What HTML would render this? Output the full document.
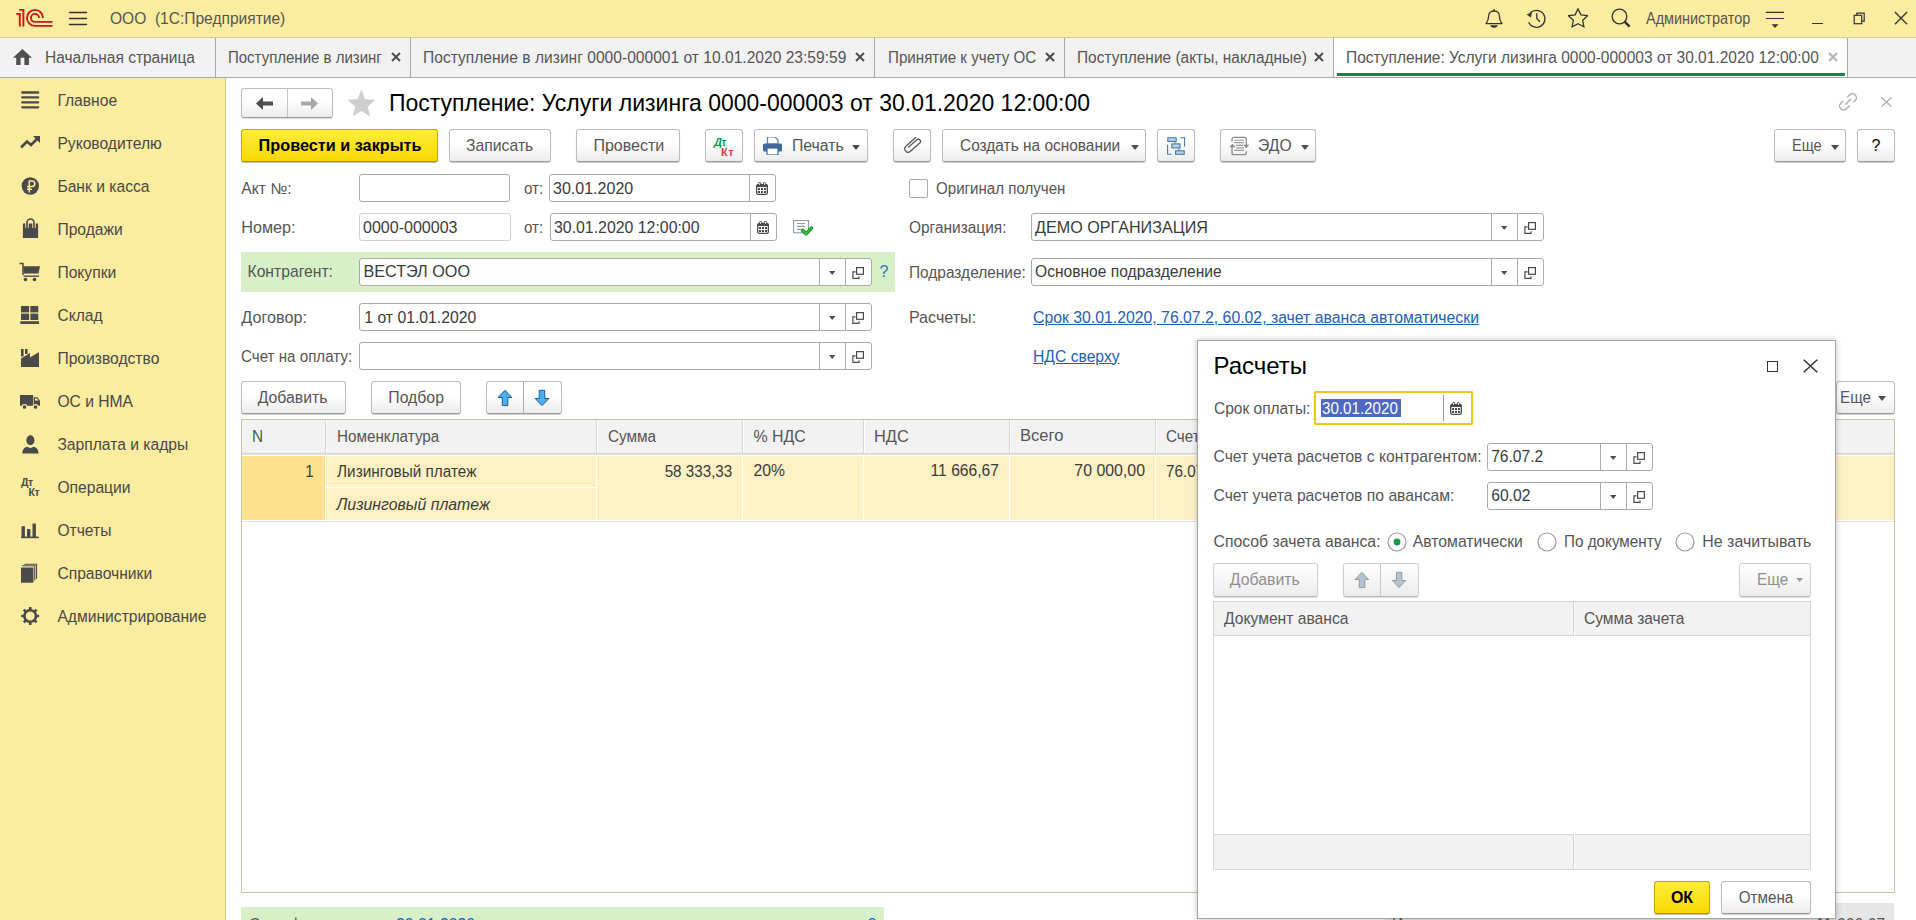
<!DOCTYPE html><html><head><meta charset="utf-8"><style>
*{margin:0;padding:0}
html,body{width:1916px;height:920px;overflow:hidden;background:#fff;font-family:"Liberation Sans",sans-serif;}
.t{position:absolute;white-space:pre;}
.r{position:absolute;}
</style></head><body><div class="r" style="left:0px;top:0px;width:1916px;height:37px;background:#fbec9f;"></div>
<div class="r" style="left:0px;top:37px;width:1916px;height:1px;background:#d9cb85;"></div>
<svg class="r" style="left:15px;top:8px" width="39" height="20" viewBox="0 0 39 20"><g fill="none" stroke="#d3121e" stroke-width="1.9"><path d="M1.2 5.9H4.8V18.5M4.2 1.9H8.4V18.5"/><path d="M28 9.9A8 8 0 1 0 20 17.9H37.5"/><path d="M24 9.9A4 4 0 1 0 20 13.9H37.5"/></g></svg>
<svg class="r" style="left:68px;top:10px" width="20" height="16" viewBox="0 0 20 16"><g stroke="#333" stroke-width="1.4" stroke-linecap="round"><path d="M1.5 2.5H18.5M1.5 8.5H18.5M1.5 14.5H18.5"/></g></svg>
<div class="t " style="left:110px;transform:scaleX(0.9842);transform-origin:0 0;top:8.03px;font-size:15.8px;line-height:21px;color:#555555;font-weight:normal;font-style:normal;">ООО  (1С:Предприятие)</div>
<svg class="r" style="left:1484px;top:8px" width="20" height="22" viewBox="0 0 20 22"><circle cx="10" cy="2.3" r="1.1" fill="#333"/><path d="M2 15.6C4 13 4.6 11 4.6 8.2C4.6 5 7 3.2 10 3.2S15.4 5 15.4 8.2C15.4 11 16 13 18 15.6Z" fill="none" stroke="#333" stroke-width="1.25" stroke-linejoin="round"/><path d="M6.4 17.3H13.6A3.6 2.4 0 0 1 6.4 17.3Z" fill="#333"/></svg>
<svg class="r" style="left:1525px;top:8px" width="22" height="22" viewBox="0 0 22 22"><g fill="none" stroke="#333" stroke-width="1.3"><path d="M5.2 5A8.5 8.5 0 1 1 3.6 14.2"/><path d="M11.8 5.3V10.5L14.9 13.8"/></g><path d="M1.6 6.4L6.9 4.3L6 9.6Z" fill="#333"/></svg>
<svg class="r" style="left:1568px;top:8px" width="20" height="21" viewBox="0 0 20 21"><path d="M10.00 0.80 L12.88 6.84 L19.51 7.71 L14.66 12.31 L15.88 18.89 L10.00 15.70 L4.12 18.89 L5.34 12.31 L0.49 7.71 L7.12 6.84Z" fill="none" stroke="#333" stroke-width="1.3" stroke-linejoin="miter"/></svg>
<svg class="r" style="left:1610px;top:7px" width="22" height="22" viewBox="0 0 22 22"><circle cx="9.5" cy="9.5" r="7.3" fill="none" stroke="#333" stroke-width="1.35"/><path d="M14.6 14.6L19.6 19.6" stroke="#333" stroke-width="2.6"/></svg>
<div class="t " style="left:1646px;transform:scaleX(0.9146);transform-origin:0 0;top:8.03px;font-size:15.8px;line-height:21px;color:#555555;font-weight:normal;font-style:normal;">Администратор</div>
<svg class="r" style="left:1764px;top:10px" width="22" height="20" viewBox="0 0 22 20"><g stroke="#333" stroke-width="1.2"><path d="M1.9 2.4H20M1.9 8.5H20"/></g><path d="M7.5 14.2h7l-3.5 3.8z" fill="#333"/></svg>
<div class="r" style="left:1812px;top:22.7px;width:11px;height:1.1999999999999993px;background:#333;"></div>
<svg class="r" style="left:1853px;top:12px" width="13" height="13" viewBox="0 0 13 13"><g fill="none" stroke="#333" stroke-width="1.2"><rect x="1.2" y="3.3" width="7.5" height="8.4"/><path d="M3.8 3.3V1.1h7.4v8.1H8.7"/></g></svg>
<svg class="r" style="left:1894px;top:11px" width="14" height="14" viewBox="0 0 14 14"><path d="M.9 1L13.1 13.2M13.1 1L.9 13.2" stroke="#333" stroke-width="1.3"/></svg>
<div class="r" style="left:0px;top:38px;width:1916px;height:39px;background:#f2f2f2;"></div>
<div class="r" style="left:0px;top:77px;width:1916px;height:1px;background:#a8a8a8;"></div>
<div class="r" style="left:215px;top:38px;width:1px;height:39px;background:#a8a8a8;"></div>
<div class="r" style="left:410px;top:38px;width:1px;height:39px;background:#a8a8a8;"></div>
<div class="r" style="left:874px;top:38px;width:1px;height:39px;background:#a8a8a8;"></div>
<div class="r" style="left:1064px;top:38px;width:1px;height:39px;background:#a8a8a8;"></div>
<div class="r" style="left:1333px;top:38px;width:1px;height:39px;background:#a8a8a8;"></div>
<div class="r" style="left:1847px;top:38px;width:1px;height:39px;background:#a8a8a8;"></div>
<div class="r" style="left:1334px;top:38px;width:513px;height:39px;background:#fff;"></div>
<div class="r" style="left:1337px;top:73px;width:508px;height:3px;background:#0e8a3f;"></div>
<svg class="r" style="left:12px;top:47px" width="22" height="19" viewBox="0 0 22 19"><path d="M10.4 1.9L20 10.7H16.9V17.9H12.4V10.7H8.6V17.9H4.2V10.7H0.9Z" fill="#4f4f4f"/></svg>
<div class="t " style="left:44.5px;transform:scaleX(0.9810);transform-origin:0 0;top:47.03px;font-size:15.8px;line-height:21px;color:#555555;font-weight:normal;font-style:normal;">Начальная страница</div>
<div class="t " style="left:228.3px;transform:scaleX(0.9494);transform-origin:0 0;top:47.03px;font-size:15.8px;line-height:21px;color:#555555;font-weight:normal;font-style:normal;">Поступление в лизинг</div>
<svg class="r" style="left:391px;top:52px" width="10" height="10" viewBox="0 0 10 10"><path d="M1 1L9 9M9 1L1 9" stroke="#4d4d4d" stroke-width="2"/></svg>
<div class="t " style="left:423px;top:47.59px;font-size:15.6px;line-height:20px;color:#555555;font-weight:normal;font-style:normal;">Поступление в лизинг 0000-000001 от 10.01.2020 23:59:59</div>
<svg class="r" style="left:855px;top:52px" width="10" height="10" viewBox="0 0 10 10"><path d="M1 1L9 9M9 1L1 9" stroke="#4d4d4d" stroke-width="2"/></svg>
<div class="t " style="left:887.8px;transform:scaleX(0.9589);transform-origin:0 0;top:47.03px;font-size:15.8px;line-height:21px;color:#555555;font-weight:normal;font-style:normal;">Принятие к учету ОС</div>
<svg class="r" style="left:1045px;top:52px" width="10" height="10" viewBox="0 0 10 10"><path d="M1 1L9 9M9 1L1 9" stroke="#4d4d4d" stroke-width="2"/></svg>
<div class="t " style="left:1077px;transform:scaleX(0.9778);transform-origin:0 0;top:47.03px;font-size:15.8px;line-height:21px;color:#555555;font-weight:normal;font-style:normal;">Поступление (акты, накладные)</div>
<svg class="r" style="left:1314px;top:52px" width="10" height="10" viewBox="0 0 10 10"><path d="M1 1L9 9M9 1L1 9" stroke="#4d4d4d" stroke-width="2"/></svg>
<div class="t " style="left:1346.4px;transform:scaleX(0.9810);transform-origin:0 0;top:47.03px;font-size:15.8px;line-height:21px;color:#555555;font-weight:normal;font-style:normal;">Поступление: Услуги лизинга 0000-000003 от 30.01.2020 12:00:00</div>
<svg class="r" style="left:1828px;top:52px" width="10" height="10" viewBox="0 0 10 10"><path d="M1 1L9 9M9 1L1 9" stroke="#b0b0b0" stroke-width="2"/></svg>
<div class="r" style="left:0px;top:78px;width:225px;height:842px;background:#fbec9f;"></div>
<div class="r" style="left:225px;top:78px;width:1px;height:842px;background:#d3c78f;"></div>
<div class="t " style="left:57.4px;top:90.58px;font-size:15.65px;line-height:20px;color:#484848;font-weight:normal;font-style:normal;">Главное</div>
<div class="t " style="left:57.4px;top:133.58px;font-size:15.65px;line-height:20px;color:#484848;font-weight:normal;font-style:normal;">Руководителю</div>
<div class="t " style="left:57.4px;top:176.58px;font-size:15.65px;line-height:20px;color:#484848;font-weight:normal;font-style:normal;">Банк и касса</div>
<div class="t " style="left:57.4px;top:219.58px;font-size:15.65px;line-height:20px;color:#484848;font-weight:normal;font-style:normal;">Продажи</div>
<div class="t " style="left:57.4px;top:262.58px;font-size:15.65px;line-height:20px;color:#484848;font-weight:normal;font-style:normal;">Покупки</div>
<div class="t " style="left:57.4px;top:305.58px;font-size:15.65px;line-height:20px;color:#484848;font-weight:normal;font-style:normal;">Склад</div>
<div class="t " style="left:57.4px;top:348.58px;font-size:15.65px;line-height:20px;color:#484848;font-weight:normal;font-style:normal;">Производство</div>
<div class="t " style="left:57.4px;top:391.58px;font-size:15.65px;line-height:20px;color:#484848;font-weight:normal;font-style:normal;">ОС и НМА</div>
<div class="t " style="left:57.4px;top:434.58px;font-size:15.65px;line-height:20px;color:#484848;font-weight:normal;font-style:normal;">Зарплата и кадры</div>
<div class="t " style="left:57.4px;top:477.58px;font-size:15.65px;line-height:20px;color:#484848;font-weight:normal;font-style:normal;">Операции</div>
<div class="t " style="left:57.4px;top:520.58px;font-size:15.65px;line-height:20px;color:#484848;font-weight:normal;font-style:normal;">Отчеты</div>
<div class="t " style="left:57.4px;top:563.58px;font-size:15.65px;line-height:20px;color:#484848;font-weight:normal;font-style:normal;">Справочники</div>
<div class="t " style="left:57.4px;top:606.58px;font-size:15.65px;line-height:20px;color:#484848;font-weight:normal;font-style:normal;">Администрирование</div>
<svg class="r" style="left:20px;top:90px" width="20" height="20" viewBox="0 0 20 20"><g stroke="#4a4a4a" stroke-width="2.3" stroke-linecap="round"><path d="M2.2 2.5H18.2M2.2 7.4H18.2M2.2 12.3H18.2M2.2 17.3H18.2"/></g></svg>
<svg class="r" style="left:20px;top:135px" width="21" height="14" viewBox="0 0 21 14"><path d="M1 12.5L7 6.5L11 10L18 3" fill="none" stroke="#4a4a4a" stroke-width="2.6"/><path d="M13 1H20V8z" fill="#4a4a4a"/></svg>
<svg class="r" style="left:21px;top:177px" width="18" height="18" viewBox="0 0 18 18"><circle cx="9.3" cy="9" r="8.7" fill="#4a4a4a"/><path d="M8.3 15.5V4h2.7a2.8 2.8 0 0 1 0 5.6H6 M6 12.3H11" fill="none" stroke="#fbec9f" stroke-width="1.5"/></svg>
<svg class="r" style="left:22px;top:218px" width="17" height="21" viewBox="0 0 17 21"><path d="M0.9 5.5h15.2v14.5H0.9z" fill="#4a4a4a"/><path d="M5 10V4.5a3.5 3.5 0 0 1 7 0V10" fill="none" stroke="#fbec9f" stroke-width="3.4"/><path d="M5 10V4.5a3.5 3.5 0 0 1 7 0V10" fill="none" stroke="#4a4a4a" stroke-width="1.6"/></svg>
<svg class="r" style="left:19px;top:262px" width="22" height="20" viewBox="0 0 22 20"><path d="M0.5 1.5H4V13" fill="none" stroke="#4a4a4a" stroke-width="1.5"/><path d="M4 4.2H21L19.5 11.5H5z" fill="#4a4a4a"/><path d="M4.5 14.2H20" stroke="#4a4a4a" stroke-width="1.4"/><circle cx="6.5" cy="17.5" r="1.8" fill="#4a4a4a"/><circle cx="15.5" cy="17.5" r="1.8" fill="#4a4a4a"/></svg>
<svg class="r" style="left:20px;top:305px" width="20" height="20" viewBox="0 0 20 20"><g fill="#4a4a4a"><rect x="1" y="1" width="8.1" height="6.4"/><rect x="10.4" y="1" width="7.9" height="6.4"/><rect x="1" y="8.6" width="8.1" height="6.4"/><rect x="10.4" y="8.6" width="7.9" height="6.4"/><rect x="0.3" y="16.2" width="18.7" height="2.8"/></g></svg>
<svg class="r" style="left:20px;top:348px" width="20" height="20" viewBox="0 0 20 20"><path d="M1 19V10.5L10 5V9.5L19 4V19z" fill="#4a4a4a"/><path d="M1 1h2.6v7.5H1z M5 1h2.6v5H5z" fill="#4a4a4a"/></svg>
<svg class="r" style="left:19px;top:394px" width="22" height="16" viewBox="0 0 22 16"><path d="M1 1h13.2v10.8H1z" fill="#4a4a4a"/><path d="M14.8 3.2h3.6l2.6 3.6v5H14.8z" fill="#4a4a4a"/><path d="M16 4.6h2l1.4 2H16z" fill="#fbec9f"/><circle cx="5.5" cy="13" r="2.4" fill="#4a4a4a" stroke="#fbec9f" stroke-width="1.1"/><circle cx="16.5" cy="13" r="2.4" fill="#4a4a4a" stroke="#fbec9f" stroke-width="1.1"/></svg>
<svg class="r" style="left:22px;top:435px" width="17" height="19" viewBox="0 0 17 19"><ellipse cx="8.4" cy="5.3" rx="4" ry="5" fill="#4a4a4a"/><path d="M0.3 18.5c0-4 2.2-6.3 5-6.8l3.1 1.6 3.1-1.6c2.8.5 5 2.8 5 6.8z" fill="#4a4a4a"/></svg>
<div class="t " style="left:21px;top:475.36px;font-size:10.5px;line-height:14px;color:#4a4a4a;font-weight:bold;font-style:normal;letter-spacing:-.4px;">Дт</div>
<div class="t " style="left:28.5px;top:484.96px;font-size:10.5px;line-height:14px;color:#4a4a4a;font-weight:bold;font-style:normal;letter-spacing:-.4px;">Кт</div>
<svg class="r" style="left:20px;top:523px" width="20" height="16" viewBox="0 0 20 16"><g fill="#4a4a4a"><rect x="1.5" y="3.2" width="3.4" height="11"/><rect x="7" y="6" width="3.4" height="8.2"/><rect x="12.5" y="0.5" width="3.4" height="13.7"/><rect x="1" y="13.6" width="17.8" height="1.6"/></g></svg>
<svg class="r" style="left:20px;top:563px" width="20" height="21" viewBox="0 0 20 21"><path d="M1 4.5h12.4v15.2H1z" fill="#4a4a4a"/><path d="M2.6 3V2.8h12.1V17.6 M4.4 1.2h12.1V15.8" fill="none" stroke="#4a4a4a" stroke-width="1.1"/></svg>
<svg class="r" style="left:20px;top:606px" width="20" height="20" viewBox="0 0 20 20"><g transform="translate(10.2 10)"><circle r="5.8" fill="none" stroke="#4a4a4a" stroke-width="2.6"/><g stroke="#4a4a4a" stroke-width="2.6"><path d="M0 -9V-5M0 9V5M-9 0H-5M9 0H5M-6.4 -6.4L-3.6 -3.6M6.4 6.4L3.6 3.6M-6.4 6.4L-3.6 3.6M6.4 -6.4L3.6 -3.6"/></g></g></svg>
<div class="r" style="left:241px;top:88px;width:92px;height:30px;box-sizing:border-box;background:linear-gradient(#ffffff 40%,#ececec);border:1px solid #bdbdbd;border-bottom-color:#9a9a9a;border-radius:3px;box-shadow:0 1px 1px rgba(0,0,0,.15);"></div>
<div class="r" style="left:287px;top:89px;width:1px;height:28px;background:#c4c4c4;"></div>
<svg class="r" style="left:256px;top:97px" width="18" height="13" viewBox="0 0 18 13"><path d="M0 6.5L7 0V4.5H17V8.5H7V13z" fill="#4d4d4d"/></svg>
<svg class="r" style="left:300px;top:97px" width="18" height="13" viewBox="0 0 18 13"><path d="M18 6.5L11 0V4.5H1V8.5H11V13z" fill="#a8a8a8"/></svg>
<svg class="r" style="left:346px;top:88px" width="31" height="30" viewBox="0 0 31 30"><path d="M15.40 1.47 L19.22 11.14 L29.60 11.79 L21.58 18.41 L24.18 28.48 L15.40 22.90 L6.62 28.48 L9.22 18.41 L1.20 11.79 L11.58 11.14Z" fill="#cfcfcf"/></svg>
<div class="t " style="left:389px;top:87.18px;font-size:24px;line-height:31px;color:#000;font-weight:normal;font-style:normal;transform:scaleX(0.9575);transform-origin:0 0;">Поступление: Услуги лизинга 0000-000003 от 30.01.2020 12:00:00</div>
<svg class="r" style="left:1836px;top:89px" width="24" height="24" viewBox="0 0 24 24"><g fill="none" stroke="#ababab" stroke-width="1.45"><path d="M11.2 8.3L13.6 5.9A3.95 3.95 0 0 1 19.2 11.5L17.6 13.1"/><path d="M7.2 11.8L4.8 14.2A3.95 3.95 0 0 0 10.4 19.8L13.7 16.5"/><path d="M9.4 15.5L15.1 9.8"/></g></svg>
<svg class="r" style="left:1881px;top:97px" width="11" height="10" viewBox="0 0 11 10"><path d="M.5 .5L10.5 9.5M10.5 .5L.5 9.5" stroke="#b0b0b0" stroke-width="1.3"/></svg>
<div class="r" style="left:241px;top:129px;width:197px;height:33px;box-sizing:border-box;background:linear-gradient(#ffec40,#f7d900);border:1px solid #c9a800;border-bottom-color:#a88f00;border-radius:3px;box-shadow:0 1px 1px rgba(0,0,0,.25);"></div>
<div class="t " style="left:258.6px;top:134.87px;font-size:16.25px;line-height:21px;color:#000;font-weight:bold;font-style:normal;">Провести и закрыть</div>
<div class="r" style="left:449px;top:129px;width:102px;height:33px;box-sizing:border-box;background:linear-gradient(#ffffff 40%,#ececec);border:1px solid #bdbdbd;border-bottom-color:#9a9a9a;border-radius:3px;box-shadow:0 1px 1px rgba(0,0,0,.2);"></div>
<div class="t " style="left:466px;top:135.54px;font-size:15.75px;line-height:20px;color:#555555;font-weight:normal;font-style:normal;">Записать</div>
<div class="r" style="left:576px;top:129px;width:104px;height:33px;box-sizing:border-box;background:linear-gradient(#ffffff 40%,#ececec);border:1px solid #bdbdbd;border-bottom-color:#9a9a9a;border-radius:3px;box-shadow:0 1px 1px rgba(0,0,0,.2);"></div>
<div class="t " style="left:593.4px;top:134.94px;font-size:16.05px;line-height:21px;color:#555555;font-weight:normal;font-style:normal;">Провести</div>
<div class="r" style="left:705px;top:129px;width:38px;height:33px;box-sizing:border-box;background:linear-gradient(#ffffff 40%,#ececec);border:1px solid #bdbdbd;border-bottom-color:#9a9a9a;border-radius:3px;box-shadow:0 1px 1px rgba(0,0,0,.2);"></div>
<div class="t " style="left:714px;top:135.49px;font-size:11px;line-height:14px;color:#12994a;font-weight:bold;font-style:italic;">Д</div>
<div class="t " style="left:721.3px;top:135.49px;font-size:11px;line-height:14px;color:#12994a;font-weight:bold;font-style:normal;">т</div>
<div class="t " style="left:721px;top:145.19px;font-size:11px;line-height:14px;color:#e03a3a;font-weight:bold;font-style:normal;letter-spacing:.6px;">Кт</div>
<div class="r" style="left:754px;top:129px;width:114px;height:33px;box-sizing:border-box;background:linear-gradient(#ffffff 40%,#ececec);border:1px solid #bdbdbd;border-bottom-color:#9a9a9a;border-radius:3px;box-shadow:0 1px 1px rgba(0,0,0,.2);"></div>
<svg class="r" style="left:763px;top:137px" width="19" height="18" viewBox="0 0 19 18"><path d="M4.5 0h7.5l3 3v4h-10.5z" fill="#fff" stroke="#5a7fa8" stroke-width="1.2"/><rect x="0" y="6.5" width="19" height="8" rx="1.5" fill="#3d6a9c"/><rect x="4" y="11" width="11" height="7" fill="#fff" stroke="#3d6a9c" stroke-width="1.2"/></svg>
<div class="t " style="left:792px;top:135.03px;font-size:15.8px;line-height:21px;color:#555555;font-weight:normal;font-style:normal;">Печать</div>
<svg class="r" style="left:852.0px;top:144.5px" width="8" height="5" viewBox="0 0 8 5"><path d="M0 0H8L4.0 5Z" fill="#4d4d4d"/></svg>
<div class="r" style="left:893px;top:129px;width:38px;height:33px;box-sizing:border-box;background:linear-gradient(#ffffff 40%,#ececec);border:1px solid #bdbdbd;border-bottom-color:#9a9a9a;border-radius:3px;box-shadow:0 1px 1px rgba(0,0,0,.2);"></div>
<svg class="r" style="left:900px;top:134px" width="22" height="22" viewBox="0 0 22 22"><path transform="translate(8.2 14.8) rotate(-42)" d="M13 -3.4L0 -3.4A3.4 3.4 0 0 0 0 3.4L12.5 3.4A2.2 2.2 0 0 0 12.5 -1L1.5 -1" fill="none" stroke="#555" stroke-width="1.25" stroke-linecap="round"/></svg>
<div class="r" style="left:942px;top:129px;width:204px;height:33px;box-sizing:border-box;background:linear-gradient(#ffffff 40%,#ececec);border:1px solid #bdbdbd;border-bottom-color:#9a9a9a;border-radius:3px;box-shadow:0 1px 1px rgba(0,0,0,.2);"></div>
<div class="t " style="left:960.3px;transform:scaleX(0.9778);transform-origin:0 0;top:135.03px;font-size:15.8px;line-height:21px;color:#555555;font-weight:normal;font-style:normal;">Создать на основании</div>
<svg class="r" style="left:1130.5px;top:144.5px" width="8" height="5" viewBox="0 0 8 5"><path d="M0 0H8L4.0 5Z" fill="#4d4d4d"/></svg>
<div class="r" style="left:1157px;top:129px;width:38px;height:33px;box-sizing:border-box;background:linear-gradient(#ffffff 40%,#ececec);border:1px solid #bdbdbd;border-bottom-color:#9a9a9a;border-radius:3px;box-shadow:0 1px 1px rgba(0,0,0,.2);"></div>
<svg class="r" style="left:1165px;top:135px" width="22" height="22" viewBox="0 0 22 22"><g fill="#bcd2ea" stroke="#4778aa" stroke-width="1.1"><rect x="2.8" y="2.8" width="8.4" height="3.6"/><rect x="6.8" y="8.9" width="8.3" height="4"/><rect x="10.6" y="15.8" width="8.6" height="3.5"/></g><path d="M9.8 6.7V8.6M13.9 13.2V15.5M2.6 9.8V19.3H6.7M15.3 2.7H19.5V11.5" fill="none" stroke="#4778aa" stroke-width="1.1"/></svg>
<div class="r" style="left:1220px;top:129px;width:96px;height:33px;box-sizing:border-box;background:linear-gradient(#ffffff 40%,#ececec);border:1px solid #bdbdbd;border-bottom-color:#9a9a9a;border-radius:3px;box-shadow:0 1px 1px rgba(0,0,0,.2);"></div>
<svg class="r" style="left:1227px;top:135px" width="24" height="22" viewBox="0 0 24 22"><g fill="none" stroke="#8a8a8a" stroke-width="1.3"><path d="M5 6.5V4.3a2 2 0 0 1 2-2H17.3a2 2 0 0 1 2 2V10.5"/><path d="M19.3 16.2v1.5a2 2 0 0 1-2 2H7a2 2 0 0 1-2-2V12"/></g><g stroke="#999" stroke-width="1.1"><path d="M7.2 5.3H17M7.2 7.6H17M8.8 10.4H16M9.3 12.9H17M7.2 15.4H17"/></g><path d="M2.4 12.3H8.6L5.5 8.8z M16.1 9.8H22.3L19.2 13.2z" fill="#8a8a8a"/></svg>
<div class="t " style="left:1258px;top:135.56px;font-size:15.7px;line-height:20px;color:#555555;font-weight:normal;font-style:normal;">ЭДО</div>
<svg class="r" style="left:1300.5px;top:144.5px" width="8" height="5" viewBox="0 0 8 5"><path d="M0 0H8L4.0 5Z" fill="#4d4d4d"/></svg>
<div class="r" style="left:1774px;top:129px;width:72px;height:33px;box-sizing:border-box;background:linear-gradient(#ffffff 40%,#ececec);border:1px solid #bdbdbd;border-bottom-color:#9a9a9a;border-radius:3px;box-shadow:0 1px 1px rgba(0,0,0,.2);"></div>
<div class="t " style="left:1791.8px;transform:scaleX(0.9241);transform-origin:0 0;top:135.03px;font-size:15.8px;line-height:21px;color:#555555;font-weight:normal;font-style:normal;">Еще</div>
<svg class="r" style="left:1830.7px;top:144.5px" width="8" height="5" viewBox="0 0 8 5"><path d="M0 0H8L4.0 5Z" fill="#4d4d4d"/></svg>
<div class="r" style="left:1857px;top:129px;width:38px;height:33px;box-sizing:border-box;background:linear-gradient(#ffffff 40%,#ececec);border:1px solid #bdbdbd;border-bottom-color:#9a9a9a;border-radius:3px;box-shadow:0 1px 1px rgba(0,0,0,.2);"></div>
<div class="t " style="left:1876px;transform:translateX(-50%) ;top:134.96px;font-size:16px;line-height:21px;color:#000;font-weight:normal;font-style:normal;">?</div>
<div class="t " style="left:241.3px;top:178.56px;font-size:15.7px;line-height:20px;color:#555555;font-weight:normal;font-style:normal;">Акт №:</div>
<div class="r" style="left:359px;top:174px;width:151px;height:28px;box-sizing:border-box;background:#fff;border:1px solid #a9a9a9;border-radius:3px;"></div>
<div class="t " style="left:523.5px;transform:scaleX(0.9620);transform-origin:0 0;top:178.03px;font-size:15.8px;line-height:21px;color:#555555;font-weight:normal;font-style:normal;">от:</div>
<div class="r" style="left:549px;top:174px;width:227px;height:28px;box-sizing:border-box;background:#fff;border:1px solid #a9a9a9;border-radius:3px;"></div>
<div class="r" style="left:749px;top:175px;width:1px;height:26px;background:#a9a9a9;"></div>
<div class="t " style="left:553px;top:177.94px;font-size:16.05px;line-height:21px;color:#3b3b3b;font-weight:normal;font-style:normal;">30.01.2020</div>
<svg class="r" style="left:756px;top:182px" width="12" height="13" viewBox="0 0 12 13"><rect x=".65" y="2.4" width="10.7" height="9.95" rx="1.6" fill="#fff" stroke="#4a4a4a" stroke-width="1.3"/><path d="M.65 4.9V3.9a1.5 1.5 0 0 1 1.5-1.5h7.7a1.5 1.5 0 0 1 1.5 1.5v1z" fill="#4a4a4a"/><rect x="2.4" y="0" width="2.3" height="4" rx="1.1" fill="#4a4a4a"/><rect x="7.3" y="0" width="2.3" height="4" rx="1.1" fill="#4a4a4a"/><rect x="3.1" y=".8" width=".9" height="2" fill="#fff"/><rect x="8" y=".8" width=".9" height="2" fill="#fff"/><g fill="#4a4a4a"><rect x="2" y="6" width="2" height="2"/><rect x="5" y="6" width="2" height="2"/><rect x="8" y="6" width="2" height="2"/><rect x="2" y="9" width="2" height="2"/><rect x="5" y="9" width="2" height="2"/><rect x="8" y="9" width="2" height="2"/></g></svg>
<div class="r" style="left:909px;top:179px;width:19px;height:19px;box-sizing:border-box;border:1px solid #a9a9a9;border-radius:2px;background:#fff;"></div>
<div class="t " style="left:935.5px;transform:scaleX(0.9557);transform-origin:0 0;top:178.03px;font-size:15.8px;line-height:21px;color:#555555;font-weight:normal;font-style:normal;">Оригинал получен</div>
<div class="t " style="left:241.3px;top:216.89px;font-size:16.2px;line-height:21px;color:#555555;font-weight:normal;font-style:normal;">Номер:</div>
<div class="r" style="left:359px;top:213px;width:152px;height:28px;box-sizing:border-box;background:#fff;border:1px solid #d2d2d2;border-radius:3px;"></div>
<div class="t " style="left:363px;top:216.94px;font-size:16.05px;line-height:21px;color:#3b3b3b;font-weight:normal;font-style:normal;">0000-000003</div>
<div class="t " style="left:524.3px;transform:scaleX(0.9620);transform-origin:0 0;top:217.03px;font-size:15.8px;line-height:21px;color:#555555;font-weight:normal;font-style:normal;">от:</div>
<div class="r" style="left:550px;top:213px;width:227px;height:28px;box-sizing:border-box;background:#fff;border:1px solid #a9a9a9;border-radius:3px;"></div>
<div class="r" style="left:750px;top:214px;width:1px;height:26px;background:#a9a9a9;"></div>
<div class="t " style="left:554px;top:217.00px;font-size:15.87px;line-height:21px;color:#3b3b3b;font-weight:normal;font-style:normal;">30.01.2020 12:00:00</div>
<svg class="r" style="left:757px;top:221px" width="12" height="13" viewBox="0 0 12 13"><rect x=".65" y="2.4" width="10.7" height="9.95" rx="1.6" fill="#fff" stroke="#4a4a4a" stroke-width="1.3"/><path d="M.65 4.9V3.9a1.5 1.5 0 0 1 1.5-1.5h7.7a1.5 1.5 0 0 1 1.5 1.5v1z" fill="#4a4a4a"/><rect x="2.4" y="0" width="2.3" height="4" rx="1.1" fill="#4a4a4a"/><rect x="7.3" y="0" width="2.3" height="4" rx="1.1" fill="#4a4a4a"/><rect x="3.1" y=".8" width=".9" height="2" fill="#fff"/><rect x="8" y=".8" width=".9" height="2" fill="#fff"/><g fill="#4a4a4a"><rect x="2" y="6" width="2" height="2"/><rect x="5" y="6" width="2" height="2"/><rect x="8" y="6" width="2" height="2"/><rect x="2" y="9" width="2" height="2"/><rect x="5" y="9" width="2" height="2"/><rect x="8" y="9" width="2" height="2"/></g></svg>
<svg class="r" style="left:793px;top:220px" width="21" height="17" viewBox="0 0 21 17"><rect x=".6" y=".5" width="15" height="12.3" fill="#fff" stroke="#8a9bb0" stroke-width="1.1"/><path d="M4 3.5H12M4 6.4H12M4 9.4H8.5" stroke="#8a9bb0" stroke-width="1.1"/><path d="M9.6 10.4L13 13.8L18.5 8" fill="none" stroke="#0e7f16" stroke-width="3.4" stroke-linecap="round" stroke-linejoin="round"/><path d="M9.6 10.4L13 13.8L18.5 8" fill="none" stroke="#2bc532" stroke-width="2" stroke-linecap="round" stroke-linejoin="round"/></svg>
<div class="t " style="left:908.9px;transform:scaleX(0.9778);transform-origin:0 0;top:217.03px;font-size:15.8px;line-height:21px;color:#555555;font-weight:normal;font-style:normal;">Организация:</div>
<div class="r" style="left:1031px;top:213px;width:513px;height:28px;box-sizing:border-box;background:#fff;border:1px solid #a9a9a9;border-radius:3px;"></div>
<div class="r" style="left:1491px;top:214px;width:1px;height:26px;background:#a9a9a9;"></div>
<div class="r" style="left:1517px;top:214px;width:1px;height:26px;background:#a9a9a9;"></div>
<div class="t " style="left:1035px;top:216.90px;font-size:16.15px;line-height:21px;color:#3b3b3b;font-weight:normal;font-style:normal;">ДЕМО ОРГАНИЗАЦИЯ</div>
<svg class="r" style="left:1500.8px;top:226.4px" width="6.4" height="4" viewBox="0 0 6.4 4"><path d="M0 0H6.4L3.2 4Z" fill="#4d4d4d"/></svg>
<svg class="r" style="left:1524px;top:221px" width="13" height="14" viewBox="0 0 13 14"><rect x="4.6" y="1.6" width="6.8" height="6.7" fill="none" stroke="#4a4a4a" stroke-width="1.2"/><path d="M3.6 5.8H.9V12.3H7V10.2" fill="none" stroke="#4a4a4a" stroke-width="1.2"/></svg>
<div class="r" style="left:241px;top:252px;width:654px;height:40px;background:#d7f0c7;"></div>
<div class="t " style="left:247.5px;top:262.06px;font-size:15.7px;line-height:20px;color:#555555;font-weight:normal;font-style:normal;">Контрагент:</div>
<div class="r" style="left:359px;top:258px;width:513px;height:28px;box-sizing:border-box;background:#fff;border:1px solid #a9a9a9;border-radius:3px;"></div>
<div class="r" style="left:819px;top:259px;width:1px;height:26px;background:#a9a9a9;"></div>
<div class="r" style="left:845px;top:259px;width:1px;height:26px;background:#a9a9a9;"></div>
<div class="t " style="left:363.4px;top:261.39px;font-size:16.2px;line-height:21px;color:#3b3b3b;font-weight:normal;font-style:normal;">ВЕСТЭЛ ООО</div>
<svg class="r" style="left:828.8px;top:270.9px" width="6.4" height="4" viewBox="0 0 6.4 4"><path d="M0 0H6.4L3.2 4Z" fill="#4d4d4d"/></svg>
<svg class="r" style="left:852px;top:266px" width="13" height="14" viewBox="0 0 13 14"><rect x="4.6" y="1.6" width="6.8" height="6.7" fill="none" stroke="#4a4a4a" stroke-width="1.2"/><path d="M3.6 5.8H.9V12.3H7V10.2" fill="none" stroke="#4a4a4a" stroke-width="1.2"/></svg>
<div class="t " style="left:884px;transform:translateX(-50%) ;top:261.46px;font-size:16px;line-height:21px;color:#1a78c2;font-weight:normal;font-style:normal;">?</div>
<div class="t " style="left:908.9px;transform:scaleX(0.9778);transform-origin:0 0;top:261.53px;font-size:15.8px;line-height:21px;color:#555555;font-weight:normal;font-style:normal;">Подразделение:</div>
<div class="r" style="left:1031px;top:258px;width:513px;height:28px;box-sizing:border-box;background:#fff;border:1px solid #a9a9a9;border-radius:3px;"></div>
<div class="r" style="left:1491px;top:259px;width:1px;height:26px;background:#a9a9a9;"></div>
<div class="r" style="left:1517px;top:259px;width:1px;height:26px;background:#a9a9a9;"></div>
<div class="t " style="left:1035px;top:262.09px;font-size:15.6px;line-height:20px;color:#3b3b3b;font-weight:normal;font-style:normal;">Основное подразделение</div>
<svg class="r" style="left:1500.8px;top:270.9px" width="6.4" height="4" viewBox="0 0 6.4 4"><path d="M0 0H6.4L3.2 4Z" fill="#4d4d4d"/></svg>
<svg class="r" style="left:1524px;top:266px" width="13" height="14" viewBox="0 0 13 14"><rect x="4.6" y="1.6" width="6.8" height="6.7" fill="none" stroke="#4a4a4a" stroke-width="1.2"/><path d="M3.6 5.8H.9V12.3H7V10.2" fill="none" stroke="#4a4a4a" stroke-width="1.2"/></svg>
<div class="t " style="left:241.3px;top:306.89px;font-size:16.2px;line-height:21px;color:#555555;font-weight:normal;font-style:normal;">Договор:</div>
<div class="r" style="left:359px;top:303px;width:513px;height:28px;box-sizing:border-box;background:#fff;border:1px solid #a9a9a9;border-radius:3px;"></div>
<div class="r" style="left:819px;top:304px;width:1px;height:26px;background:#a9a9a9;"></div>
<div class="r" style="left:845px;top:304px;width:1px;height:26px;background:#a9a9a9;"></div>
<div class="t " style="left:364.3px;top:307.54px;font-size:15.75px;line-height:20px;color:#3b3b3b;font-weight:normal;font-style:normal;">1 от 01.01.2020</div>
<svg class="r" style="left:828.8px;top:315.9px" width="6.4" height="4" viewBox="0 0 6.4 4"><path d="M0 0H6.4L3.2 4Z" fill="#4d4d4d"/></svg>
<svg class="r" style="left:852px;top:311px" width="13" height="14" viewBox="0 0 13 14"><rect x="4.6" y="1.6" width="6.8" height="6.7" fill="none" stroke="#4a4a4a" stroke-width="1.2"/><path d="M3.6 5.8H.9V12.3H7V10.2" fill="none" stroke="#4a4a4a" stroke-width="1.2"/></svg>
<div class="t " style="left:908.9px;top:306.92px;font-size:16.1px;line-height:21px;color:#555555;font-weight:normal;font-style:normal;">Расчеты:</div>
<div class="t " style="left:1033px;top:307.03px;font-size:15.8px;line-height:21px;color:#2160b8;font-weight:normal;font-style:normal;text-decoration:underline;">Срок 30.01.2020, 76.07.2, 60.02, зачет аванса автоматически</div>
<div class="t " style="left:241.3px;transform:scaleX(0.9589);transform-origin:0 0;top:346.03px;font-size:15.8px;line-height:21px;color:#555555;font-weight:normal;font-style:normal;">Счет на оплату:</div>
<div class="r" style="left:359px;top:342px;width:513px;height:28px;box-sizing:border-box;background:#fff;border:1px solid #a9a9a9;border-radius:3px;"></div>
<div class="r" style="left:819px;top:343px;width:1px;height:26px;background:#a9a9a9;"></div>
<div class="r" style="left:845px;top:343px;width:1px;height:26px;background:#a9a9a9;"></div>
<svg class="r" style="left:828.8px;top:354.9px" width="6.4" height="4" viewBox="0 0 6.4 4"><path d="M0 0H6.4L3.2 4Z" fill="#4d4d4d"/></svg>
<svg class="r" style="left:852px;top:350px" width="13" height="14" viewBox="0 0 13 14"><rect x="4.6" y="1.6" width="6.8" height="6.7" fill="none" stroke="#4a4a4a" stroke-width="1.2"/><path d="M3.6 5.8H.9V12.3H7V10.2" fill="none" stroke="#4a4a4a" stroke-width="1.2"/></svg>
<div class="t " style="left:1033px;top:346.56px;font-size:15.7px;line-height:20px;color:#2160b8;font-weight:normal;font-style:normal;text-decoration:underline;">НДС сверху</div>
<div class="r" style="left:241px;top:381px;width:105px;height:33px;box-sizing:border-box;background:linear-gradient(#ffffff 40%,#ececec);border:1px solid #bdbdbd;border-bottom-color:#9a9a9a;border-radius:3px;box-shadow:0 1px 1px rgba(0,0,0,.2);"></div>
<div class="t " style="left:257.7px;top:386.73px;font-size:15.8px;line-height:21px;color:#555555;font-weight:normal;font-style:normal;">Добавить</div>
<div class="r" style="left:371px;top:381px;width:90px;height:33px;box-sizing:border-box;background:linear-gradient(#ffffff 40%,#ececec);border:1px solid #bdbdbd;border-bottom-color:#9a9a9a;border-radius:3px;box-shadow:0 1px 1px rgba(0,0,0,.2);"></div>
<div class="t " style="left:388.3px;top:386.73px;font-size:15.8px;line-height:21px;color:#555555;font-weight:normal;font-style:normal;">Подбор</div>
<div class="r" style="left:486px;top:381px;width:76px;height:33px;box-sizing:border-box;background:linear-gradient(#ffffff 40%,#ececec);border:1px solid #bdbdbd;border-bottom-color:#9a9a9a;border-radius:3px;box-shadow:0 1px 1px rgba(0,0,0,.2);"></div>
<div class="r" style="left:523px;top:382px;width:1px;height:31px;background:#ababab;"></div>
<svg class="r" style="left:497px;top:389px" width="16" height="18" viewBox="0 0 16 18"><path d="M8 1.3L14.8 8.5H10.8V16.6H5.3V8.5H1.1Z" fill="#4ab1ed" stroke="#125d99" stroke-width="1" stroke-linejoin="round"/></svg>
<svg class="r" style="left:534px;top:389px" width="16" height="18" viewBox="0 0 16 18"><path d="M5.2 1.3H10.7V9.5H14.9L8 16.6L1.2 9.5H5.2Z" fill="#4ab1ed" stroke="#125d99" stroke-width="1" stroke-linejoin="round"/></svg>
<div class="r" style="left:1836px;top:381px;width:59px;height:33px;box-sizing:border-box;background:linear-gradient(#ffffff 40%,#ececec);border:1px solid #bdbdbd;border-bottom-color:#9a9a9a;border-radius:3px;box-shadow:0 1px 1px rgba(0,0,0,.2);"></div>
<div class="t " style="left:1840px;transform:scaleX(0.9620);transform-origin:0 0;top:386.73px;font-size:15.8px;line-height:21px;color:#555555;font-weight:normal;font-style:normal;">Еще</div>
<svg class="r" style="left:1878.0px;top:395.5px" width="8" height="5" viewBox="0 0 8 5"><path d="M0 0H8L4.0 5Z" fill="#4d4d4d"/></svg>
<div class="r" style="left:241px;top:419px;width:1654px;height:474px;box-sizing:border-box;border:1px solid #c9c3a3;background:#fff;"></div>
<div class="r" style="left:242px;top:420px;width:1652px;height:33px;background:#f2f2f2;"></div>
<div class="r" style="left:242px;top:453px;width:1652px;height:1px;background:#d2d2d2;"></div>
<div class="r" style="left:242px;top:454px;width:1652px;height:1px;background:#e6e6e6;"></div>
<div class="r" style="left:242px;top:455px;width:1652px;height:1px;background:#fff;"></div>
<div class="r" style="left:242px;top:456px;width:1652px;height:64px;background:#fdf1c4;"></div>
<div class="r" style="left:242px;top:520px;width:1652px;height:1px;background:#fff;"></div>
<div class="r" style="left:242px;top:521px;width:1652px;height:1px;background:#e2e2e2;"></div>
<div class="r" style="left:242px;top:456px;width:83px;height:64px;background:#fce28d;"></div>
<div class="r" style="left:325px;top:420px;width:1px;height:33px;background:#d6d6d6;"></div>
<div class="r" style="left:326px;top:420px;width:1px;height:33px;background:#fff;"></div>
<div class="r" style="left:325px;top:456px;width:1px;height:64px;background:#fff;"></div>
<div class="r" style="left:596px;top:420px;width:1px;height:33px;background:#d6d6d6;"></div>
<div class="r" style="left:597px;top:420px;width:1px;height:33px;background:#fff;"></div>
<div class="r" style="left:596px;top:456px;width:1px;height:64px;background:#fff;"></div>
<div class="r" style="left:742px;top:420px;width:1px;height:33px;background:#d6d6d6;"></div>
<div class="r" style="left:743px;top:420px;width:1px;height:33px;background:#fff;"></div>
<div class="r" style="left:742px;top:456px;width:1px;height:64px;background:#fff;"></div>
<div class="r" style="left:863px;top:420px;width:1px;height:33px;background:#d6d6d6;"></div>
<div class="r" style="left:864px;top:420px;width:1px;height:33px;background:#fff;"></div>
<div class="r" style="left:863px;top:456px;width:1px;height:64px;background:#fff;"></div>
<div class="r" style="left:1009px;top:420px;width:1px;height:33px;background:#d6d6d6;"></div>
<div class="r" style="left:1010px;top:420px;width:1px;height:33px;background:#fff;"></div>
<div class="r" style="left:1009px;top:456px;width:1px;height:64px;background:#fff;"></div>
<div class="r" style="left:1155px;top:420px;width:1px;height:33px;background:#d6d6d6;"></div>
<div class="r" style="left:1156px;top:420px;width:1px;height:33px;background:#fff;"></div>
<div class="r" style="left:1155px;top:456px;width:1px;height:64px;background:#fff;"></div>
<div class="r" style="left:326px;top:487px;width:270px;height:1px;background:#fff;"></div>
<div class="t " style="left:252.3px;transform:scaleX(0.9715);transform-origin:0 0;top:426.03px;font-size:15.8px;line-height:21px;color:#555555;font-weight:normal;font-style:normal;">N</div>
<div class="t " style="left:336.5px;transform:scaleX(0.9652);transform-origin:0 0;top:426.03px;font-size:15.8px;line-height:21px;color:#555555;font-weight:normal;font-style:normal;">Номенклатура</div>
<div class="t " style="left:607.6px;transform:scaleX(0.9684);transform-origin:0 0;top:426.03px;font-size:15.8px;line-height:21px;color:#555555;font-weight:normal;font-style:normal;">Сумма</div>
<div class="t " style="left:753.4px;top:425.97px;font-size:15.95px;line-height:21px;color:#555555;font-weight:normal;font-style:normal;">% НДС</div>
<div class="t " style="left:874px;top:425.82px;font-size:16.4px;line-height:21px;color:#555555;font-weight:normal;font-style:normal;">НДС</div>
<div class="t " style="left:1020px;top:425.25px;font-size:16.6px;line-height:22px;color:#555555;font-weight:normal;font-style:normal;">Всего</div>
<div class="t " style="left:1166px;transform:scaleX(0.9620);transform-origin:0 0;top:426.03px;font-size:15.8px;line-height:21px;color:#555555;font-weight:normal;font-style:normal;">Счет учета</div>
<div class="t " style="right:1602px;transform:scaleX(0.9620);transform-origin:100% 0;top:460.53px;font-size:15.8px;line-height:21px;color:#3b3b3b;font-weight:normal;font-style:normal;">1</div>
<div class="t " style="left:336.5px;transform:scaleX(0.9715);transform-origin:0 0;top:460.53px;font-size:15.8px;line-height:21px;color:#3b3b3b;font-weight:normal;font-style:normal;">Лизинговый платеж</div>
<div class="t " style="left:336.5px;top:494.31px;font-size:15.85px;line-height:21px;color:#3b3b3b;font-weight:normal;font-style:italic;">Лизинговый платеж</div>
<div class="t " style="right:1184px;transform:scaleX(0.9620);transform-origin:100% 0;top:460.53px;font-size:15.8px;line-height:21px;color:#3b3b3b;font-weight:normal;font-style:normal;">58 333,33</div>
<div class="t " style="left:753.4px;top:461.04px;font-size:15.75px;line-height:20px;color:#3b3b3b;font-weight:normal;font-style:normal;">20%</div>
<div class="t " style="right:917px;top:461.08px;font-size:15.65px;line-height:20px;color:#3b3b3b;font-weight:normal;font-style:normal;">11 666,67</div>
<div class="t " style="right:771px;top:460.49px;font-size:15.9px;line-height:21px;color:#3b3b3b;font-weight:normal;font-style:normal;">70 000,00</div>
<div class="t " style="left:1166px;transform:scaleX(0.9620);transform-origin:0 0;top:460.53px;font-size:15.8px;line-height:21px;color:#3b3b3b;font-weight:normal;font-style:normal;">76.07.2</div>
<div class="r" style="left:241px;top:907px;width:643px;height:13px;background:#d7f0c7;"></div>
<div class="r" style="left:1385px;top:903px;width:509px;height:17px;background:#e6e6e6;"></div>
<div class="r" style="left:1197px;top:340px;width:639px;height:579px;box-sizing:border-box;background:#fff;border:1px solid #a5a5a5;box-shadow:0 0 6px rgba(0,0,0,.25);"></div>
<div class="t " style="left:1213.5px;top:350.48px;font-size:24.0px;line-height:31px;color:#000;font-weight:normal;font-style:normal;">Расчеты</div>
<div class="r" style="left:1767px;top:361px;width:11px;height:11px;box-sizing:border-box;border:1.2px solid #333;"></div>
<svg class="r" style="left:1803px;top:359px" width="15" height="14" viewBox="0 0 15 14"><path d="M.7 .7L14.3 13.3M14.3 .7L.7 13.3" stroke="#333" stroke-width="1.5"/></svg>
<div class="t " style="left:1213.5px;transform:scaleX(0.9810);transform-origin:0 0;top:398.03px;font-size:15.8px;line-height:21px;color:#555555;font-weight:normal;font-style:normal;">Срок оплаты:</div>
<div class="r" style="left:1314px;top:391px;width:159px;height:34px;box-sizing:border-box;border:2px solid #f7c514;background:#fff;border-radius:1px;"></div>
<div class="r" style="left:1443px;top:395px;width:1px;height:26px;background:#9a9a9a;"></div>
<div class="r" style="left:1321px;top:399px;width:80px;height:17.5px;background:#4f68c6;"></div>
<div class="t " style="left:1321.5px;transform:scaleX(0.9589);transform-origin:0 0;top:398.03px;font-size:15.8px;line-height:21px;color:#fff;font-weight:normal;font-style:normal;">30.01.2020</div>
<svg class="r" style="left:1450px;top:402px" width="12" height="13" viewBox="0 0 12 13"><rect x=".65" y="2.4" width="10.7" height="9.95" rx="1.6" fill="#fff" stroke="#4a4a4a" stroke-width="1.3"/><path d="M.65 4.9V3.9a1.5 1.5 0 0 1 1.5-1.5h7.7a1.5 1.5 0 0 1 1.5 1.5v1z" fill="#4a4a4a"/><rect x="2.4" y="0" width="2.3" height="4" rx="1.1" fill="#4a4a4a"/><rect x="7.3" y="0" width="2.3" height="4" rx="1.1" fill="#4a4a4a"/><rect x="3.1" y=".8" width=".9" height="2" fill="#fff"/><rect x="8" y=".8" width=".9" height="2" fill="#fff"/><g fill="#4a4a4a"><rect x="2" y="6" width="2" height="2"/><rect x="5" y="6" width="2" height="2"/><rect x="8" y="6" width="2" height="2"/><rect x="2" y="9" width="2" height="2"/><rect x="5" y="9" width="2" height="2"/><rect x="8" y="9" width="2" height="2"/></g></svg>
<div class="t " style="left:1213.5px;top:447.16px;font-size:15.7px;line-height:20px;color:#555555;font-weight:normal;font-style:normal;">Счет учета расчетов с контрагентом:</div>
<div class="r" style="left:1487px;top:443px;width:166px;height:28px;box-sizing:border-box;background:#fff;border:1px solid #a9a9a9;border-radius:3px;"></div>
<div class="r" style="left:1600px;top:444px;width:1px;height:26px;background:#a9a9a9;"></div>
<div class="r" style="left:1626px;top:444px;width:1px;height:26px;background:#a9a9a9;"></div>
<div class="t " style="left:1491.2px;top:447.19px;font-size:15.6px;line-height:20px;color:#3b3b3b;font-weight:normal;font-style:normal;">76.07.2</div>
<svg class="r" style="left:1609.8px;top:455.9px" width="6.4" height="4" viewBox="0 0 6.4 4"><path d="M0 0H6.4L3.2 4Z" fill="#4d4d4d"/></svg>
<svg class="r" style="left:1633px;top:451px" width="13" height="14" viewBox="0 0 13 14"><rect x="4.6" y="1.6" width="6.8" height="6.7" fill="none" stroke="#4a4a4a" stroke-width="1.2"/><path d="M3.6 5.8H.9V12.3H7V10.2" fill="none" stroke="#4a4a4a" stroke-width="1.2"/></svg>
<div class="t " style="left:1213.5px;top:486.16px;font-size:15.7px;line-height:20px;color:#555555;font-weight:normal;font-style:normal;">Счет учета расчетов по авансам:</div>
<div class="r" style="left:1487px;top:482px;width:166px;height:28px;box-sizing:border-box;background:#fff;border:1px solid #a9a9a9;border-radius:3px;"></div>
<div class="r" style="left:1600px;top:483px;width:1px;height:26px;background:#a9a9a9;"></div>
<div class="r" style="left:1626px;top:483px;width:1px;height:26px;background:#a9a9a9;"></div>
<div class="t " style="left:1491.2px;top:486.18px;font-size:15.65px;line-height:20px;color:#3b3b3b;font-weight:normal;font-style:normal;">60.02</div>
<svg class="r" style="left:1609.8px;top:494.9px" width="6.4" height="4" viewBox="0 0 6.4 4"><path d="M0 0H6.4L3.2 4Z" fill="#4d4d4d"/></svg>
<svg class="r" style="left:1633px;top:490px" width="13" height="14" viewBox="0 0 13 14"><rect x="4.6" y="1.6" width="6.8" height="6.7" fill="none" stroke="#4a4a4a" stroke-width="1.2"/><path d="M3.6 5.8H.9V12.3H7V10.2" fill="none" stroke="#4a4a4a" stroke-width="1.2"/></svg>
<div class="t " style="left:1213.5px;top:531.03px;font-size:15.8px;line-height:21px;color:#555555;font-weight:normal;font-style:normal;">Способ зачета аванса:</div>
<svg class="r" style="left:1386.5px;top:531.5px" width="20" height="20" viewBox="0 0 20 20"><circle cx="10" cy="10" r="9" fill="#fff" stroke="#9a9a9a" stroke-width="1.2"/><circle cx="10" cy="10" r="3.4" fill="#129a46"/></svg>
<div class="t " style="left:1412.8px;top:531.54px;font-size:15.75px;line-height:20px;color:#555555;font-weight:normal;font-style:normal;">Автоматически</div>
<svg class="r" style="left:1537.3px;top:531.5px" width="20" height="20" viewBox="0 0 20 20"><circle cx="10" cy="10" r="9" fill="#fff" stroke="#9a9a9a" stroke-width="1.2"/></svg>
<div class="t " style="left:1564.4px;transform:scaleX(0.9652);transform-origin:0 0;top:531.03px;font-size:15.8px;line-height:21px;color:#555555;font-weight:normal;font-style:normal;">По документу</div>
<svg class="r" style="left:1675.2px;top:531.5px" width="20" height="20" viewBox="0 0 20 20"><circle cx="10" cy="10" r="9" fill="#fff" stroke="#9a9a9a" stroke-width="1.2"/></svg>
<div class="t " style="left:1702.3px;top:530.97px;font-size:15.95px;line-height:21px;color:#555555;font-weight:normal;font-style:normal;">Не зачитывать</div>
<div class="r" style="left:1213px;top:563px;width:105px;height:34px;box-sizing:border-box;background:linear-gradient(#ffffff,#ececec);border:1px solid #cfcfcf;border-bottom-color:#b5b5b5;border-radius:3px;box-shadow:0 1px 1px rgba(0,0,0,.15);"></div>
<div class="t " style="left:1229.8px;top:568.51px;font-size:15.85px;line-height:21px;color:#8f8f8f;font-weight:normal;font-style:normal;">Добавить</div>
<div class="r" style="left:1343px;top:563px;width:76px;height:34px;box-sizing:border-box;background:linear-gradient(#ffffff,#ececec);border:1px solid #cfcfcf;border-bottom-color:#b5b5b5;border-radius:3px;box-shadow:0 1px 1px rgba(0,0,0,.15);"></div>
<div class="r" style="left:1380px;top:564px;width:1px;height:33px;background:#c8c8c8;"></div>
<svg class="r" style="left:1353px;top:571px" width="17" height="18" viewBox="0 0 17 18"><path d="M8.8 1.3L15.7 8.5H11.8V16.6H6.3V8.5H2.1Z" fill="#b6c1c9" stroke="#8e9ca7" stroke-width="1" stroke-linejoin="round"/></svg>
<svg class="r" style="left:1391px;top:571px" width="17" height="18" viewBox="0 0 17 18"><path d="M5.4 1.3H10.8V9.4H14.8L8.1 16.6L1.2 9.4H5.4Z" fill="#b6c1c9" stroke="#8e9ca7" stroke-width="1" stroke-linejoin="round"/></svg>
<div class="r" style="left:1739px;top:563px;width:72px;height:34px;box-sizing:border-box;background:linear-gradient(#ffffff,#ececec);border:1px solid #cfcfcf;border-bottom-color:#b5b5b5;border-radius:3px;box-shadow:0 1px 1px rgba(0,0,0,.15);"></div>
<div class="t " style="left:1756.5px;transform:scaleX(0.9715);transform-origin:0 0;top:568.53px;font-size:15.8px;line-height:21px;color:#8f8f8f;font-weight:normal;font-style:normal;">Еще</div>
<svg class="r" style="left:1795.5px;top:578.0px" width="7" height="4" viewBox="0 0 7 4"><path d="M0 0H7L3.5 4Z" fill="#9a9a9a"/></svg>
<div class="r" style="left:1213px;top:601px;width:598px;height:269px;box-sizing:border-box;border:1px solid #d6d6d6;background:#fff;"></div>
<div class="r" style="left:1214px;top:602px;width:596px;height:34px;background:#f2f2f2;border-bottom:1px solid #d6d6d6;box-sizing:border-box;"></div>
<div class="r" style="left:1214px;top:834px;width:596px;height:35px;background:#f2f2f2;border-top:1px solid #d6d6d6;box-sizing:border-box;"></div>
<div class="r" style="left:1573px;top:602px;width:1px;height:34px;background:#d6d6d6;"></div>
<div class="r" style="left:1574px;top:602px;width:1px;height:34px;background:#fff;"></div>
<div class="r" style="left:1573px;top:834px;width:1px;height:35px;background:#d6d6d6;"></div>
<div class="r" style="left:1574px;top:834px;width:1px;height:35px;background:#fff;"></div>
<div class="t " style="left:1224px;top:608.58px;font-size:15.65px;line-height:20px;color:#555555;font-weight:normal;font-style:normal;">Документ аванса</div>
<div class="t " style="left:1584px;transform:scaleX(0.9842);transform-origin:0 0;top:608.03px;font-size:15.8px;line-height:21px;color:#555555;font-weight:normal;font-style:normal;">Сумма зачета</div>
<div class="r" style="left:1654px;top:881px;width:56px;height:33px;box-sizing:border-box;background:linear-gradient(#ffec40,#f7d900);border:1px solid #c9a800;border-bottom-color:#a88f00;border-radius:3px;box-shadow:0 1px 1px rgba(0,0,0,.25);"></div>
<div class="t " style="left:1682px;transform:translateX(-50%) ;top:886.96px;font-size:16px;line-height:21px;color:#000;font-weight:bold;font-style:normal;">ОК</div>
<div class="r" style="left:1721px;top:881px;width:90px;height:33px;box-sizing:border-box;background:linear-gradient(#ffffff 40%,#ececec);border:1px solid #bdbdbd;border-bottom-color:#9a9a9a;border-radius:3px;box-shadow:0 1px 1px rgba(0,0,0,.2);"></div>
<div class="t " style="left:1766px;transform:translateX(-50%) scaleX(0.9620);top:887.03px;font-size:15.8px;line-height:21px;color:#555555;font-weight:normal;font-style:normal;">Отмена</div>
<div class="t " style="left:249px;top:914.03px;font-size:15.8px;line-height:21px;color:#555555;font-weight:normal;font-style:normal;">Счет-фактура:</div>
<div class="t " style="left:396px;top:914.03px;font-size:15.8px;line-height:21px;color:#2160b8;font-weight:normal;font-style:normal;">30.01.2020</div>
<div class="t " style="left:872px;transform:translateX(-50%) ;top:913.96px;font-size:16px;line-height:21px;color:#1a78c2;font-weight:normal;font-style:normal;">?</div>
<div class="t " style="left:1392px;top:914.03px;font-size:15.8px;line-height:21px;color:#555555;font-weight:normal;font-style:normal;">Итого</div>
<div class="t " style="right:31px;top:914.03px;font-size:15.8px;line-height:21px;color:#555555;font-weight:normal;font-style:normal;">11 666,67</div></body></html>
